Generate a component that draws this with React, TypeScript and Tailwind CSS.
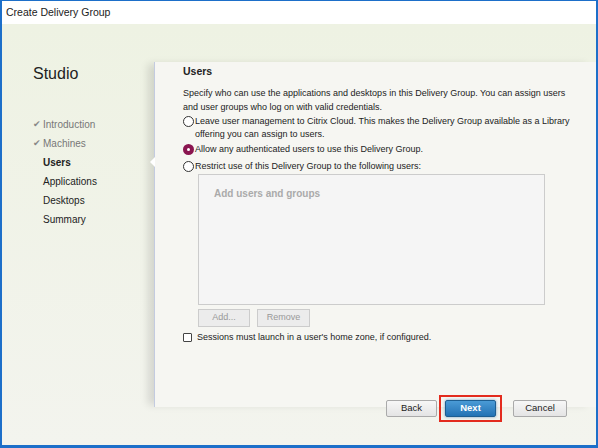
import React from "react";

const font = { fontFamily: '"Liberation Sans", Arial, sans-serif' };

function Radio({ checked }: { checked?: boolean }) {
  return checked ? (
    <span className="mt-[1px] inline-flex h-[11px] w-[11px] shrink-0 items-center justify-center rounded-full bg-[#8a1550]">
      <span className="h-[3px] w-[3px] rounded-full bg-white" />
    </span>
  ) : (
    <span className="mt-[1px] inline-block h-[11px] w-[11px] shrink-0 rounded-full border border-[#333] bg-white" />
  );
}

function Step({ label, done, active }: { label: string; done?: boolean; active?: boolean }) {
  return (
    <div className="flex h-[19px] items-center">
      <span className="w-[10px] text-[9px] text-[#888]">{done ? "✔" : ""}</span>
      <span
        className={
          active
            ? "text-[10px] font-bold text-[#222]"
            : done
            ? "text-[10px] text-[#777]"
            : "text-[10px] text-[#222]"
        }
      >
        {label}
      </span>
    </div>
  );
}

export default function App() {
  return (
    <div className="h-[448px] w-[598px] overflow-hidden bg-[#1d6fc9] p-[2px] pb-[3px] pt-[1px]" style={font}>
      <div className="flex h-full w-full flex-col">
        <div className="flex h-[23px] items-center bg-white pl-[4px] text-[10.5px] text-[#222]">
          Create Delivery Group
        </div>
        <div className="flex flex-1 bg-gradient-to-b from-[#eef2e3] to-[#f3f4ee]">
          <div className="w-[152px] shrink-0 pl-[31px] pt-[42px]">
            <div className="text-[16px] leading-none text-[#222]">Studio</div>
            <div className="mt-[33px] flex flex-col">
              <Step label="Introduction" done />
              <Step label="Machines" done />
              <Step label="Users" active />
              <Step label="Applications" />
              <Step label="Desktops" />
              <Step label="Summary" />
            </div>
          </div>
          <div className="relative mb-[38px] mt-[38px] flex flex-1 flex-col border-l border-[#c3cbe0] bg-[#f6f6f2] pl-[28px] pr-[20px] shadow-[-8px_0_8px_-2px_rgba(0,0,0,0.12)]">
            <div className="absolute left-[-5px] top-[95px] h-0 w-0 border-y-[5px] border-r-[5px] border-y-transparent border-r-white" />
            <div className="mt-[2px] text-[10.5px] font-bold text-[#222]">Users</div>
            <div className="mt-[6px] text-[9px] leading-[14px] text-[#222]">
              Specify who can use the applications and desktops in this Delivery Group. You can assign users and user groups who log on with valid credentials.
            </div>
            <div className="mt-[1px] flex items-start gap-[1px] text-[9px] leading-[13px] text-[#222]">
              <Radio />
              <span>
                Leave user management to Citrix Cloud. This makes the Delivery Group available as a Library offering you can assign to users.
              </span>
            </div>
            <div className="mt-[2px] flex items-start gap-[1px] text-[9px] leading-[13px] text-[#222]">
              <Radio checked />
              <span>Allow any authenticated users to use this Delivery Group.</span>
            </div>
            <div className="mt-[4px] flex items-start gap-[1px] text-[9px] leading-[13px] text-[#222]">
              <Radio />
              <span>Restrict use of this Delivery Group to the following users:</span>
            </div>
            <div className="ml-[15px] mt-[1px] h-[131px] w-[347px] border border-[#ccc] bg-[#f5f5f5] pl-[15px] pt-[11px]">
              <div className="text-[10px] font-bold text-[#aaa]">Add users and groups</div>
            </div>
            <div className="ml-[15px] mt-[4px] flex gap-[7px]">
              <div className="flex h-[18px] w-[52px] items-center justify-center border border-[#ccc] bg-[#ececec] text-[9px] text-[#999]">Add...</div>
              <div className="flex h-[18px] w-[53px] items-center justify-center border border-[#ccc] bg-[#ececec] text-[9px] text-[#999]">Remove</div>
            </div>
            <div className="mt-[4px] flex items-center gap-[5px] text-[9px] text-[#222]">
              <span className="h-[9px] w-[9px] rounded-[1px] border border-[#444] bg-white" />
              <span>Sessions must launch in a user's home zone, if configured.</span>
            </div>
            <div className="mt-auto mb-[-15px] mr-[9px] flex items-center justify-end">
              <div className="flex h-[17px] w-[51px] items-center justify-center rounded-[2px] border border-[#aaa] bg-gradient-to-b from-[#f7f7f7] to-[#e4e4e4] text-[9.5px] text-[#222]">Back</div>
              <div className="ml-[2px] flex h-[27px] w-[63px] items-center justify-center border-2 border-solid border-[#e32b1e]">
                <div className="flex h-[17px] w-[51px] items-center justify-center rounded-[2px] border border-[#1d5e91] bg-gradient-to-b from-[#4a9bd6] to-[#2272b4] text-[9.5px] font-bold text-white shadow-[0_0_3px_rgba(30,100,170,0.6)]">Next</div>
              </div>
              <div className="ml-[11px] flex h-[17px] w-[54px] items-center justify-center rounded-[2px] border border-[#aaa] bg-gradient-to-b from-[#f7f7f7] to-[#e4e4e4] text-[9.5px] text-[#222]">Cancel</div>
            </div>
          </div>
        </div>
      </div>
    </div>
  );
}
